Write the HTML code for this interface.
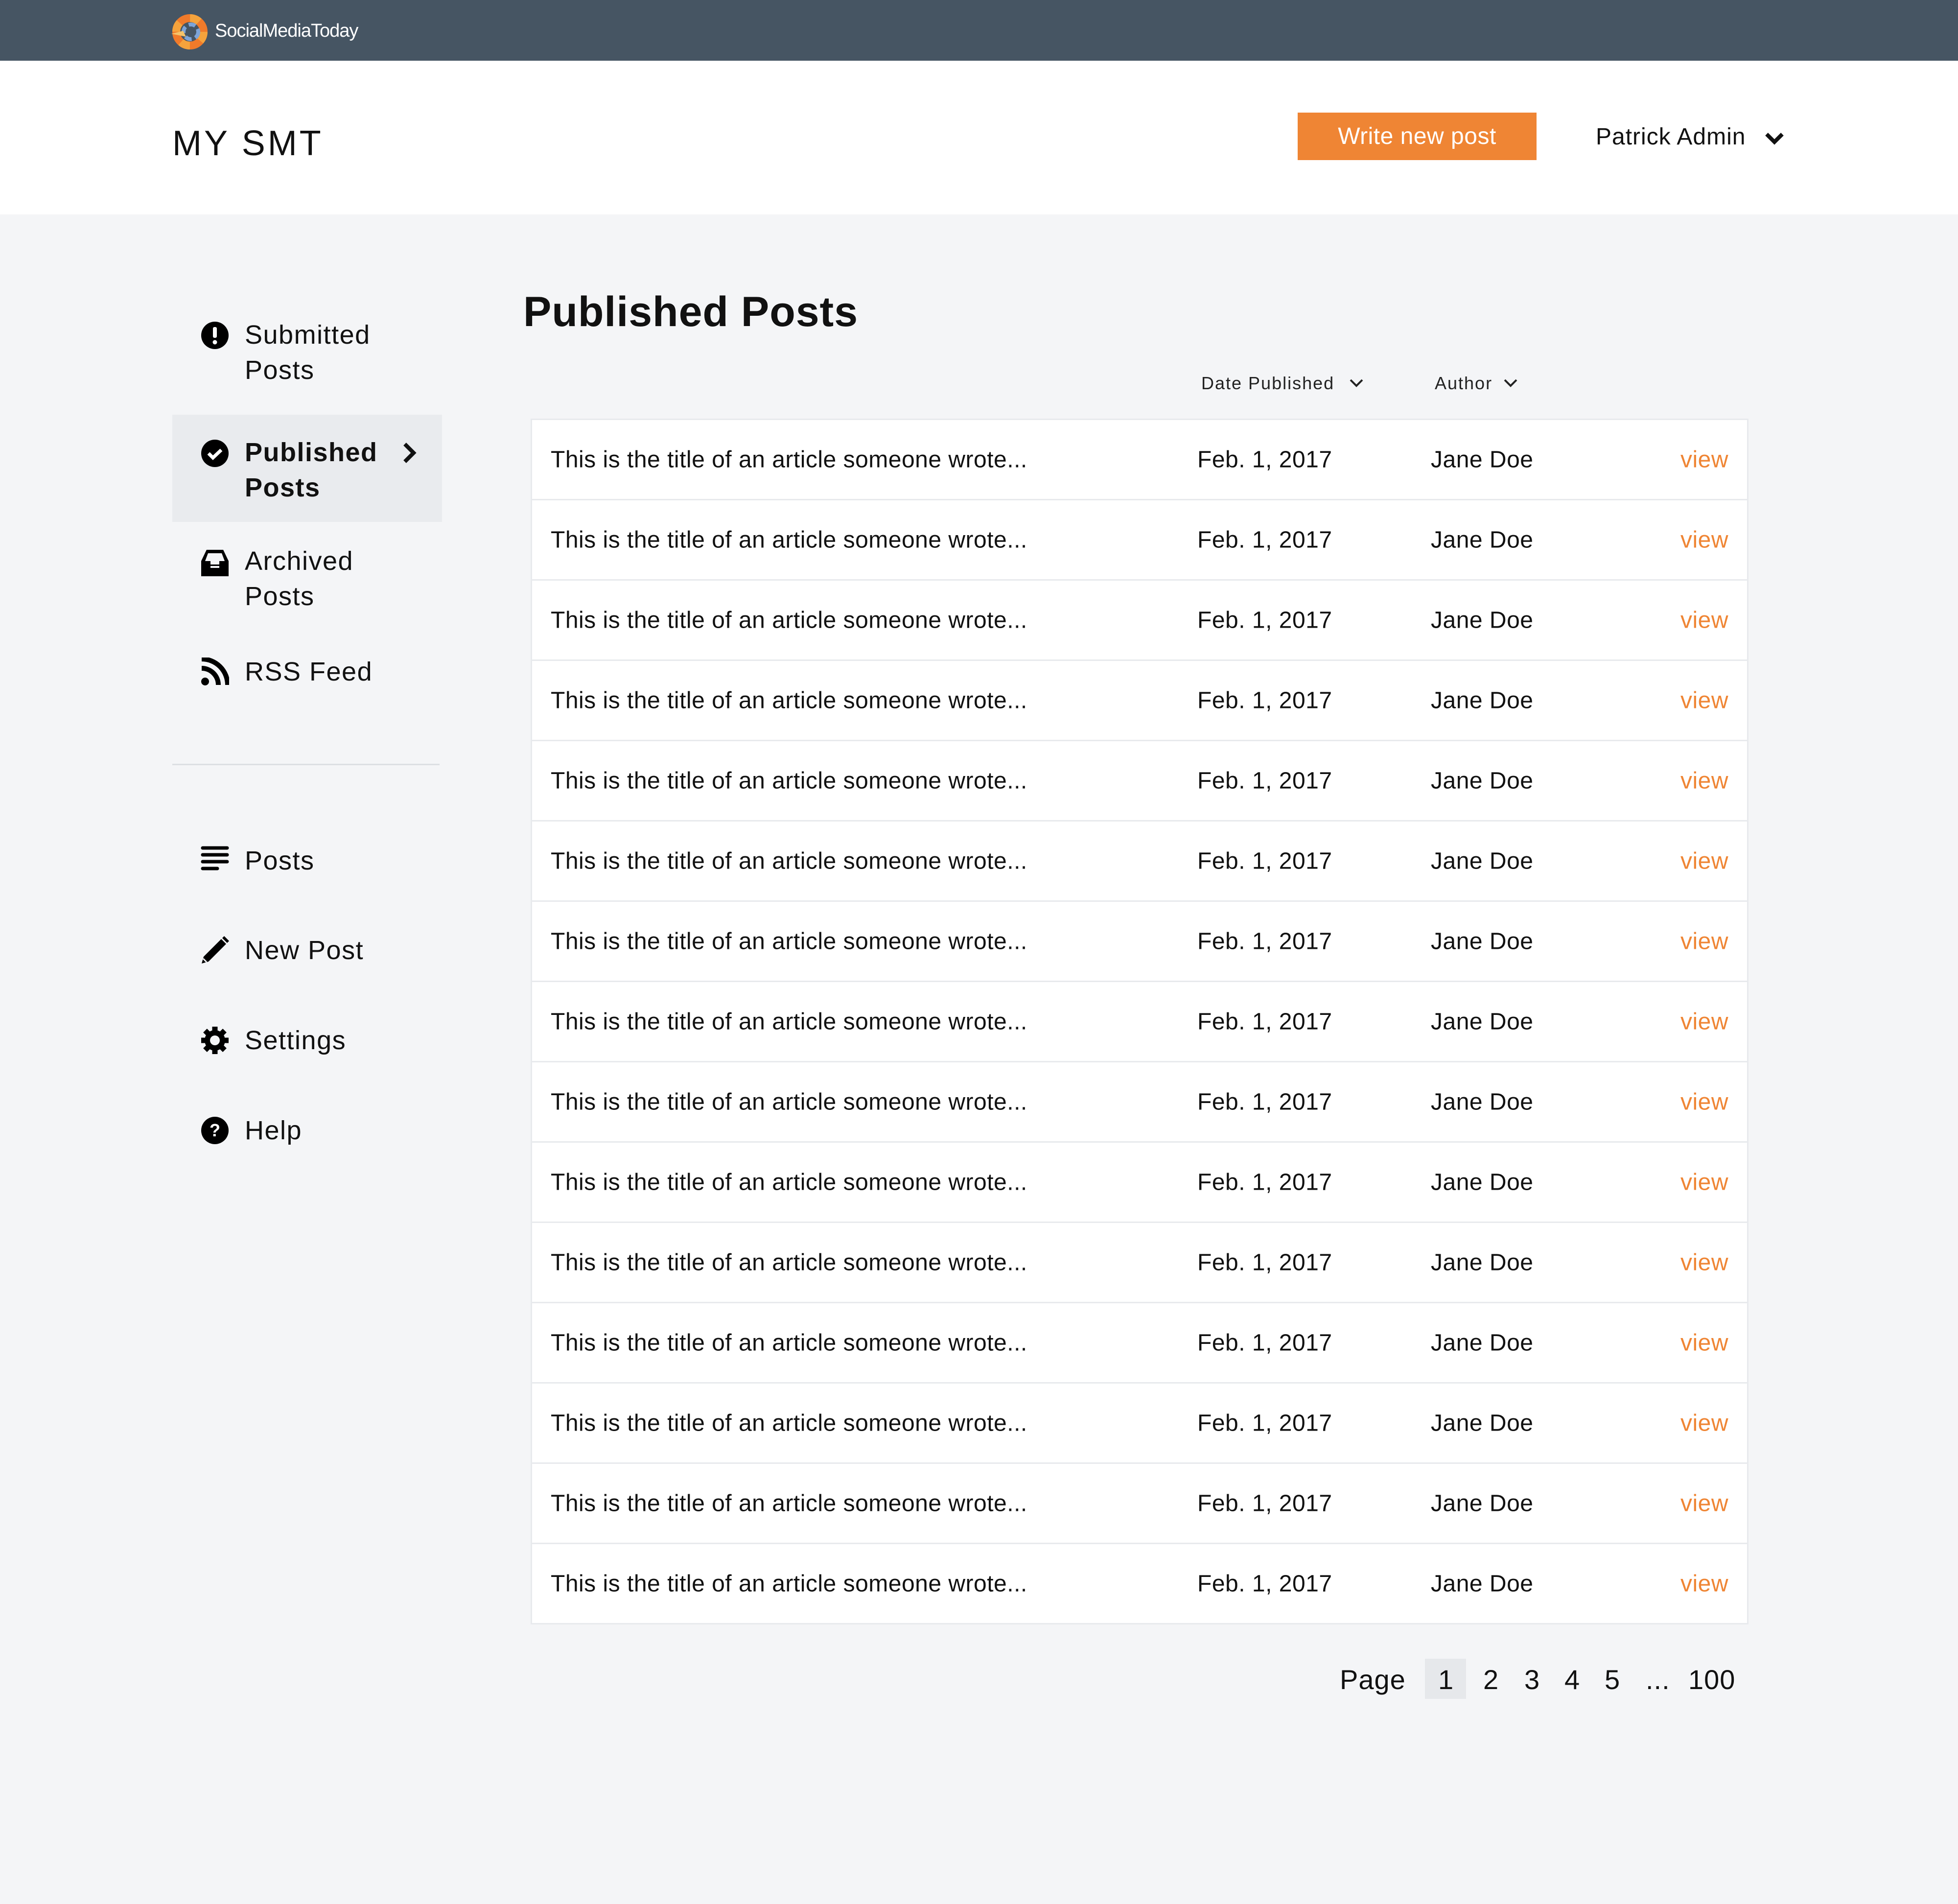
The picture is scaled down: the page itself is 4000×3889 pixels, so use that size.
<!DOCTYPE html>
<html><head><meta charset="utf-8"><style>
*{margin:0;padding:0;box-sizing:border-box}
body{width:4000px;height:3889px;background:#f4f5f7;font-family:"Liberation Sans",sans-serif;color:#111;position:relative;overflow:hidden}
.abs{position:absolute}
.top{left:0;top:0;width:4000px;height:124px;background:#465563}
.hdr{left:0;top:124px;width:4000px;height:314px;background:#fff}
.nav{position:absolute;left:500px;font-size:54px;letter-spacing:1.5px;line-height:72px;color:#111}
.ico{position:absolute;left:410px;width:58px;height:58px}
.tbl{position:absolute;left:1084px;top:855px;width:2488px;border:3px solid #e8eaed;background:#fff}
.row{position:relative;height:164px;border-top:3px solid #e8eaed;font-size:48px;letter-spacing:0.5px}
.row:first-child{border-top:none;height:161px}
.row span{position:absolute;top:50%;transform:translateY(-50%)}
.pg{position:absolute;top:3396px;font-size:56px;line-height:70px;letter-spacing:1px}
</style></head><body>
<div class="abs top"></div>
<svg class="abs" style="left:350px;top:27px" width="76" height="76" viewBox="0 0 76 76">
<circle cx="38" cy="38" r="28" fill="none" stroke="#f07a2a" stroke-width="16"/>
<circle cx="38" cy="38" r="28" fill="none" stroke="#f5a33c" stroke-width="16" stroke-dasharray="20 24"/>
<circle cx="40" cy="38" r="15" fill="none" stroke="#7da4d8" stroke-width="8" stroke-dasharray="14 8"/>
<path d="M0 42 L24 36 L30 48 Z" fill="#f5c36a"/>
</svg>
<div class="abs" style="left:439px;top:42px;font-size:38px;color:#fff;letter-spacing:-1px">SocialMediaToday</div>
<div class="abs hdr"></div>
<div class="abs" style="left:352px;top:252px;font-size:72px;letter-spacing:5px;color:#111">MY SMT</div>
<div class="abs" style="left:2651px;top:230px;width:488px;height:97px;background:#ef8534;color:#fff;font-size:48px;text-align:center;line-height:97px;letter-spacing:0.5px">Write new post</div>
<div class="abs" style="left:3260px;top:252px;font-size:48px;letter-spacing:1px;color:#111">Patrick Admin</div>
<svg class="abs" style="left:3605px;top:268px" width="40" height="30" viewBox="0 0 40 30"><path d="M4 6 L20 22 L36 6" fill="none" stroke="#111" stroke-width="8"/></svg>

<div class="abs" style="left:352px;top:847px;width:551px;height:219px;background:#e9ebee"></div>
<svg class="ico" style="top:656px" viewBox="0 0 58 58"><circle cx="29" cy="29" r="28" fill="#000"/><rect x="25" y="12" width="8" height="22" rx="3" fill="#fff"/><circle cx="29" cy="43" r="4.5" fill="#fff"/></svg>
<div class="nav" style="top:648px">Submitted<br>Posts</div>
<svg class="ico" style="top:897px" viewBox="0 0 58 58"><circle cx="29" cy="29" r="28" fill="#000"/><path d="M16 29 L25 38 L42 22" fill="none" stroke="#fff" stroke-width="7"/></svg>
<div class="nav" style="top:888px;font-weight:bold;letter-spacing:1.5px">Published<br>Posts</div>
<svg class="abs" style="left:822px;top:903px" width="30" height="44" viewBox="0 0 30 44"><path d="M5 4 L23 22 L5 40" fill="none" stroke="#111" stroke-width="8"/></svg>
<svg class="ico" style="top:1120px" viewBox="0 0 58 58"><path d="M12 3 H46 L57 26 V57 H1 V26 Z" fill="#000"/><path d="M9 26 L15 10 H43 L49 26 H38 V33 H20 V26 Z" fill="#f4f5f7"/><rect x="20" y="36" width="18" height="4" fill="#f4f5f7"/></svg>
<div class="nav" style="top:1110px">Archived<br>Posts</div>
<svg class="ico" style="top:1343px" viewBox="0 0 58 58"><path d="M2 3 A53 53 0 0 1 55 56" fill="none" stroke="#000" stroke-width="10"/><path d="M2 22 A34 34 0 0 1 36 56" fill="none" stroke="#000" stroke-width="10"/><circle cx="9" cy="49" r="8" fill="#000"/></svg>
<div class="nav" style="top:1336px">RSS Feed</div>
<div class="abs" style="left:352px;top:1560px;width:546px;height:3px;background:#dcdfe3"></div>
<svg class="ico" style="top:1727px" viewBox="0 0 58 58"><g stroke="#000" stroke-width="7" stroke-linecap="round"><line x1="4" y1="5" x2="54" y2="5"/><line x1="4" y1="19" x2="54" y2="19"/><line x1="4" y1="33" x2="54" y2="33"/><line x1="4" y1="47" x2="34" y2="47"/></g></svg>
<div class="nav" style="top:1722px">Posts</div>
<svg class="ico" style="top:1912px" viewBox="0 0 58 58"><path d="M2 56 L6 42 L42 6 L52 16 L16 52 Z" fill="#000"/><path d="M44 4 L48 0 L58 10 L54 14 Z" fill="#000"/><path d="M5 46 L12 53" stroke="#f4f5f7" stroke-width="3"/></svg>
<div class="nav" style="top:1905px">New Post</div>
<svg class="ico" style="top:2096px" viewBox="0 0 58 58"><circle cx="29" cy="29" r="21" fill="#000"/><g stroke="#000" stroke-width="11"><line x1="29" y1="1" x2="29" y2="57"/><line x1="1" y1="29" x2="57" y2="29"/><line x1="9" y1="9" x2="49" y2="49"/><line x1="49" y1="9" x2="9" y2="49"/></g><circle cx="29" cy="29" r="10" fill="#f4f5f7"/></svg>
<div class="nav" style="top:2089px">Settings</div>
<svg class="ico" style="top:2280px" viewBox="0 0 58 58"><circle cx="29" cy="29" r="28" fill="#000"/><text x="29" y="41" text-anchor="middle" font-family="Liberation Sans" font-weight="bold" font-size="36" fill="#fff">?</text></svg>
<div class="nav" style="top:2273px">Help</div>

<div class="abs" style="left:1069px;top:588px;font-size:86px;font-weight:bold;letter-spacing:1px">Published Posts</div>
<div class="abs" style="left:2454px;top:762px;font-size:36px;letter-spacing:2px;color:#222">Date Published</div>
<svg class="abs" style="left:2756px;top:772px" width="30" height="22" viewBox="0 0 30 22"><path d="M3 4 L15 16 L27 4" fill="none" stroke="#222" stroke-width="4"/></svg>
<div class="abs" style="left:2931px;top:762px;font-size:36px;letter-spacing:2px;color:#222">Author</div>
<svg class="abs" style="left:3071px;top:772px" width="30" height="22" viewBox="0 0 30 22"><path d="M3 4 L15 16 L27 4" fill="none" stroke="#222" stroke-width="4"/></svg>

<div class="tbl">
<div class="row"><span style="left:38px">This is the title of an article someone wrote...</span><span style="left:1359px">Feb. 1, 2017</span><span style="left:1836px">Jane Doe</span><span style="right:38px;color:#ef8534">view</span></div>
<div class="row"><span style="left:38px">This is the title of an article someone wrote...</span><span style="left:1359px">Feb. 1, 2017</span><span style="left:1836px">Jane Doe</span><span style="right:38px;color:#ef8534">view</span></div>
<div class="row"><span style="left:38px">This is the title of an article someone wrote...</span><span style="left:1359px">Feb. 1, 2017</span><span style="left:1836px">Jane Doe</span><span style="right:38px;color:#ef8534">view</span></div>
<div class="row"><span style="left:38px">This is the title of an article someone wrote...</span><span style="left:1359px">Feb. 1, 2017</span><span style="left:1836px">Jane Doe</span><span style="right:38px;color:#ef8534">view</span></div>
<div class="row"><span style="left:38px">This is the title of an article someone wrote...</span><span style="left:1359px">Feb. 1, 2017</span><span style="left:1836px">Jane Doe</span><span style="right:38px;color:#ef8534">view</span></div>
<div class="row"><span style="left:38px">This is the title of an article someone wrote...</span><span style="left:1359px">Feb. 1, 2017</span><span style="left:1836px">Jane Doe</span><span style="right:38px;color:#ef8534">view</span></div>
<div class="row"><span style="left:38px">This is the title of an article someone wrote...</span><span style="left:1359px">Feb. 1, 2017</span><span style="left:1836px">Jane Doe</span><span style="right:38px;color:#ef8534">view</span></div>
<div class="row"><span style="left:38px">This is the title of an article someone wrote...</span><span style="left:1359px">Feb. 1, 2017</span><span style="left:1836px">Jane Doe</span><span style="right:38px;color:#ef8534">view</span></div>
<div class="row"><span style="left:38px">This is the title of an article someone wrote...</span><span style="left:1359px">Feb. 1, 2017</span><span style="left:1836px">Jane Doe</span><span style="right:38px;color:#ef8534">view</span></div>
<div class="row"><span style="left:38px">This is the title of an article someone wrote...</span><span style="left:1359px">Feb. 1, 2017</span><span style="left:1836px">Jane Doe</span><span style="right:38px;color:#ef8534">view</span></div>
<div class="row"><span style="left:38px">This is the title of an article someone wrote...</span><span style="left:1359px">Feb. 1, 2017</span><span style="left:1836px">Jane Doe</span><span style="right:38px;color:#ef8534">view</span></div>
<div class="row"><span style="left:38px">This is the title of an article someone wrote...</span><span style="left:1359px">Feb. 1, 2017</span><span style="left:1836px">Jane Doe</span><span style="right:38px;color:#ef8534">view</span></div>
<div class="row"><span style="left:38px">This is the title of an article someone wrote...</span><span style="left:1359px">Feb. 1, 2017</span><span style="left:1836px">Jane Doe</span><span style="right:38px;color:#ef8534">view</span></div>
<div class="row"><span style="left:38px">This is the title of an article someone wrote...</span><span style="left:1359px">Feb. 1, 2017</span><span style="left:1836px">Jane Doe</span><span style="right:38px;color:#ef8534">view</span></div>
<div class="row"><span style="left:38px">This is the title of an article someone wrote...</span><span style="left:1359px">Feb. 1, 2017</span><span style="left:1836px">Jane Doe</span><span style="right:38px;color:#ef8534">view</span></div>
</div>

<div class="pg" style="left:2737px">Page</div>
<div class="abs" style="left:2911px;top:3388px;width:84px;height:82px;background:#e6e8eb"></div>
<div class="pg" style="left:2938px">1</div>
<div class="pg" style="left:3030px">2</div>
<div class="pg" style="left:3114px">3</div>
<div class="pg" style="left:3196px">4</div>
<div class="pg" style="left:3278px">5</div>
<div class="pg" style="left:3362px">...</div>
<div class="pg" style="left:3449px">100</div>
</body></html>
